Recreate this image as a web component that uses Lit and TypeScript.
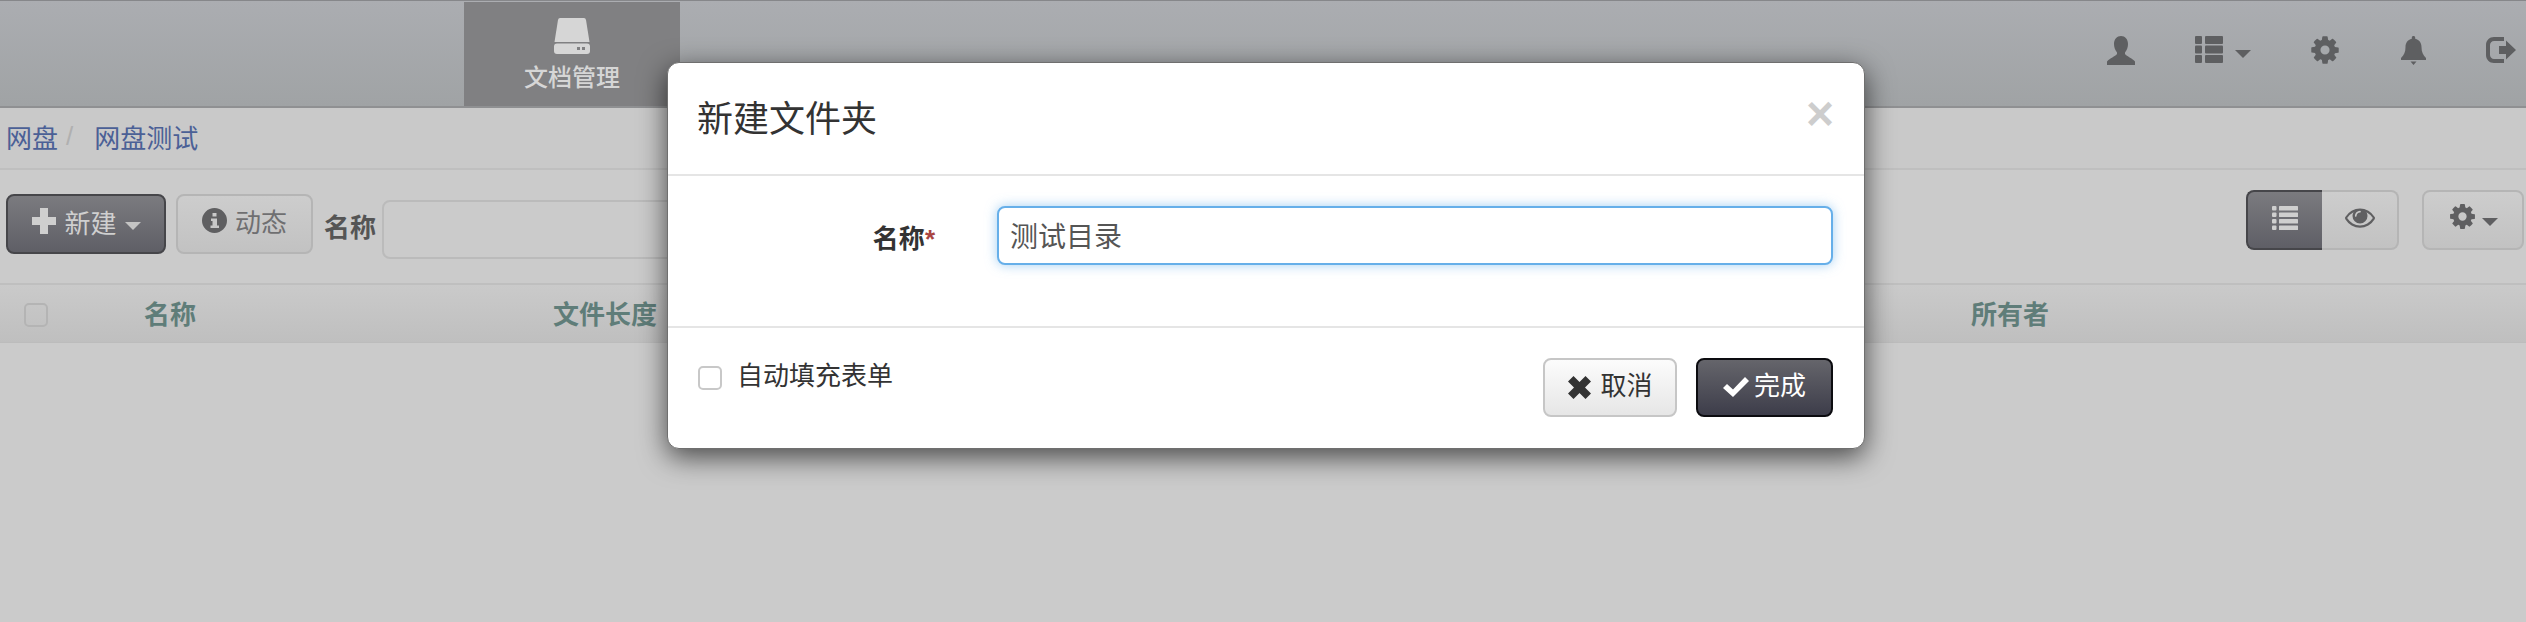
import { LitElement, html, css, svg } from "lit";
import { customElement } from "lit/decorators.js";

const ICONS: Record<string, string> = {
  cog: "M1152 896q0-106-75-181t-181-75-181 75-75 181 75 181 181 75 181-75 75-181zm512-109v222q0 12-8 23t-20 13l-185 28q-19 54-39 91 35 50 107 138 10 12 10 25t-9 23q-27 37-99 108t-94 71q-12 0-26-9l-138-108q-44 23-91 38-16 136-29 186-7 28-36 28h-222q-14 0-24.5-8.5t-11.5-21.5l-28-184q-49-16-90-37l-141 107q-10 9-25 9-14 0-25-11-126-114-165-168-7-10-7-23 0-12 8-23 15-21 51-66.5t54-70.5q-27-50-41-99l-183-27q-13-2-21-12.5t-8-23.5v-222q0-12 8-23t19-13l186-28q14-46 39-92-40-57-107-138-10-12-10-24 0-10 9-23 26-36 98.5-107.5t94.5-71.5q13 0 26 10l138 107q44-23 91-38 16-136 29-186 7-28 36-28h222q14 0 24.5 8.5t11.5 21.5l28 184q49 16 90 37l142-107q9-9 24-9 13 0 25 10 129 119 165 170 7 8 7 22 0 12-8 23-15 21-51 66.5t-54 70.5q26 50 41 98l183 28q13 2 21 12.5t8 23.5z",
  eye: "M1664 960q-152-236-381-353 61 104 61 225 0 185-131.5 316.5t-316.5 131.5-316.5-131.5-131.5-316.5q0-121 61-225-229 117-381 353 133 205 333.5 326.5t434.5 121.5 434.5-121.5 333.5-326.5zm-720-384q0-20-14-34t-34-14q-125 0-214.5 89.5t-89.5 214.5q0 20 14 34t34 14 34-14 14-34q0-86 61-147t147-61q20 0 34-14t14-34zm848 384q0 34-20 69-140 230-376.5 368.5t-499.5 138.5-499.5-139-376.5-368q-20-35-20-69t20-69q140-229 376.5-368t499.5-139 499.5 139 376.5 368q20 35 20 69z",
};

const icon = (name: string, size: number) => html`<svg class="ico" width=${size} height=${size} viewBox="0 0 1792 1792">
  <path d=${ICONS[name]} fill="currentColor"></path>
</svg>`;

const caret = () => html`<span class="caret"></span>`;

// drawn to the reference's own proportions, so each has its own box
const shape = (w: number, h: number, d: string) => html`<svg class="ico" width=${w} height=${h} viewBox="0 0 ${w} ${h}">
  <path d=${d} fill="currentColor" fill-rule="evenodd"></path>
</svg>`;

const userIcon = shape(
  28,
  29,
  "M14 0C10 0 7 3 7 8C7 11 8 14 10 16.5V18C8 20.500 3 22 0 25.500V29H28V25.500C25 22 20 20.500 18 18V16.500C20 14 21 11 21 8C21 3 18 0 14 0Z",
);
const bellIcon = shape(
  25,
  29,
  "M12.500 0c1 0 1.700.7 1.700 1.700v1C18.500 3.800 20.500 7 20.500 11c0 5 1.500 8 4.500 11v2H0v-2c3-3 4.500-6 4.500-11C4.500 7 6.500 3.800 10.800 2.700v-1C10.800.7 11.500 0 12.500 0zM9.500 25.500h6l-3 3.500z",
);
const signOutIcon = shape(
  30,
  26,
  "M18 0H8C3.500 0 0 3.500 0 8V18C0 22.500 3.500 26 8 26H18V22H8C5.800 22 4 20.200 4 18V8C4 5.800 5.800 4 8 4H18ZM13 9H20V3.500L30 13L20 22.500V17H13Z",
);
const plusIcon = shape(24, 26, "M8 0h8v9h8v8h-8v9H8v-9H0V9h8z");
const removeIcon = shape(23, 23, "M0 5.500L5.500 0L11.500 6L17.500 0L23 5.500L17 11.500L23 17.500L17.500 23L11.500 17L5.500 23L0 17.500L6 11.500Z");
const checkIcon = shape(26, 20, "M0 11L4 7L10 12.500L22 0L26 4L10 20Z");
const infoIcon = shape(
  25,
  25,
  "M12.500 0a12.500 12.500 0 1 0 0 25a12.500 12.500 0 1 0 0-25zM10.500 5h4v3.500h-4zM9 10.500h6v7h2V20H8.500v-2.500h2v-4.500H9z",
);

const thList = html`<svg class="ico" width="28" height="28" viewBox="0 0 28 28" fill="currentColor">
  ${[0, 9.5, 19].map(
    (y) => svg`<rect x="0" y=${y} width="7" height="8" rx="1"></rect><rect x="10" y=${y} width="18" height="8" rx="1"></rect>`,
  )}
</svg>`;

const listIcon = html`<svg class="ico" width="26" height="24" viewBox="0 0 26 24" fill="currentColor">
  ${[0, 6.5, 13, 19.5].map(
    (y) => svg`<rect x="0" y=${y} width="4.500" height="4.500" rx="1"></rect><rect x="7" y=${y} width="19" height="4.500" rx="0.6"></rect>`,
  )}
</svg>`;

const driveIcon = html`<svg class="ico" width="36" height="36" viewBox="0 0 36 36" fill="currentColor">
  <path d="M6 0h24q1.600 0 2 2l3.500 22H.5L4 2q.4-2 2-2z"></path>
  <path d="M3 25.500h30q3 0 3 3v4.500q0 3-3 3H3q-3 0-3-3v-4.500q0-3 3-3zM23 29v3h3v-3zM28 29v3h3v-3z" fill-rule="evenodd"></path>
</svg>`;

@customElement("app-root")
export class AppRoot extends LitElement {
  static styles = css`
    :host {
      display: block;
      position: relative;
      width: 2526px;
      height: 622px;
      overflow: hidden;
      background: #cbcbcb;
      font-family: "Liberation Sans", "Noto Sans CJK SC", sans-serif;
      font-size: 26px;
      color: #555;
    }

    .ico {
      display: block;
      flex: none;
    }

    .caret {
      display: block;
      flex: none;
      width: 0;
      height: 0;
      border-left: 8px solid transparent;
      border-right: 8px solid transparent;
      border-top: 8px solid currentColor;
    }

    .topbar {
      box-sizing: border-box;
      display: flex;
      height: 108px;
      padding-top: 1px;
      border-top: 1px solid #86878a;
      border-bottom: 2px solid #8f9092;
      background: linear-gradient(#abadb1, #a0a3a5);
      color: #5e5f61;
    }

    .tab {
      margin-left: 464px;
      width: 216px;
      box-sizing: border-box;
      padding-top: 16px;
      display: flex;
      flex-direction: column;
      align-items: center;
      gap: 7px;
      background: #808082;
      color: #d6d6d6;
      font-size: 24px;
      line-height: 34px;
      font-weight: 500;
    }

    .top-icons {
      margin-left: auto;
      padding: 33px 10px 0 0;
      display: flex;
      align-items: flex-start;
      gap: 58px;
    }

    .top-icons > * {
      width: 30px;
      height: 30px;
      display: flex;
      align-items: center;
      justify-content: center;
    }

    .top-icons > .with-caret {
      width: 58px;
      gap: 12px;
    }

    .top-icons > .with-caret .caret {
      margin-top: 8px;
    }

    .crumbs {
      box-sizing: border-box;
      height: 62px;
      padding: 0 0 4px 6px;
      display: flex;
      align-items: center;
      gap: 8px;
      border-bottom: 2px solid #bfbfbf;
      background: #c9c9c9;
      color: #4b6096;
    }

    .crumbs .sep {
      color: #b0b0b0;
      margin-right: 13px;
    }

    .toolbar {
      box-sizing: border-box;
      height: 115px;
      padding: 24px 2px 0 6px;
      display: flex;
      align-items: flex-start;
      border-bottom: 2px solid #bfbfbf;
      background: #cbcbcb;
    }

    .btn {
      box-sizing: border-box;
      height: 60px;
      display: flex;
      align-items: center;
      justify-content: center;
      border: 2px solid #b5b5b5;
      border-radius: 8px;
      background: linear-gradient(#cdcdcd, #c2c2c2);
      color: #5f5f61;
    }

    .btn.dark {
      border-color: #46464a;
      background: linear-gradient(#7b7b7f, #5f5f66);
      color: #cfcfcf;
    }

    .new-btn {
      width: 160px;
      gap: 8px;
      padding: 0 0 6px 1px;
    }

    .new-btn .caret {
      margin-top: 10px;
      color: #c4c4c4;
    }

    .activity-btn {
      width: 137px;
      margin-left: 10px;
      gap: 8px;
      color: #6f6f71;
      padding-bottom: 8px;
    }

    .activity-btn .ico {
      color: #5f5f61;
    }

    .filter-label {
      margin: 14px 6px 0 11px;
      font-weight: 700;
      line-height: 40px;
    }

    .filter-input {
      box-sizing: border-box;
      width: 400px;
      height: 59px;
      margin-top: 6px;
      border: 2px solid #bbb;
      border-radius: 8px;
      background: #cbcbcb;
    }

    .right-tools {
      margin-left: auto;
      margin-top: -4px;
      display: flex;
    }

    .view-list {
      width: 76px;
      border-radius: 8px 0 0 8px;
      border-right: 0;
      padding-bottom: 4px;
    }

    .view-eye {
      width: 77px;
      border-radius: 0 8px 8px 0;
      border-left: 0;
      padding-bottom: 6px;
    }

    .settings-btn {
      width: 102px;
      margin-left: 23px;
      gap: 5px;
    }

    .settings-btn .ico {
      margin-top: -8px;
    }

    .settings-btn .caret {
      margin-top: 3px;
    }

    .table-head {
      box-sizing: border-box;
      height: 58px;
      display: grid;
      grid-template-columns: 144px 409px 1418px 1fr;
      align-items: center;
      padding-bottom: 2px;
      border-bottom: 1px solid #bcbcbc;
      background: linear-gradient(#cacaca, #bfbfbf);
      color: #5f7d79;
      font-weight: 700;
    }

    .box {
      box-sizing: border-box;
      width: 24px;
      height: 24px;
      border: 2px solid #b4b4b4;
      border-radius: 5px;
    }

    .table-head .box {
      margin: 4px 0 0 24px;
    }

    .modal {
      position: absolute;
      left: 667px;
      top: 62px;
      width: 1198px;
      height: 387px;
      box-sizing: border-box;
      display: flex;
      flex-direction: column;
      border: 1px solid #6f6f6f;
      border-radius: 12px;
      background: #fff;
      box-shadow: 0 8px 28px rgba(0, 0, 0, 0.65);
      color: #333;
    }

    .modal-head {
      box-sizing: border-box;
      height: 113px;
      padding: 0 30px 0 29px;
      display: flex;
      align-items: center;
      justify-content: space-between;
      border-bottom: 2px solid #e5e5e5;
    }

    .modal-head h3 {
      margin: 0 0 5px;
      font-size: 36px;
      font-weight: 400;
    }

    .close {
      margin-bottom: 10px;
      font-size: 48px;
      line-height: 1;
      font-weight: 700;
      color: #cdcdcd;
    }

    .modal-body {
      box-sizing: border-box;
      height: 152px;
      padding: 30px 31px 0 0;
      display: flex;
      align-items: flex-start;
      border-bottom: 2px solid #e5e5e5;
    }

    .name-label {
      box-sizing: border-box;
      width: 267px;
      padding-top: 13px;
      text-align: right;
      font-weight: 700;
      line-height: 40px;
    }

    .name-label span {
      color: #a94442;
    }

    .name-input {
      box-sizing: border-box;
      flex: 1;
      height: 59px;
      margin-left: 62px;
      padding: 0 11px 2px;
      border: 2px solid #66afe9;
      border-radius: 8px;
      outline: none;
      box-shadow: 0 0 12px rgba(102, 175, 233, 0.6);
      font: inherit;
      font-size: 28px;
      color: #555;
    }

    .modal-foot {
      flex: 1;
      padding: 30px 31px 0 30px;
      display: flex;
      align-items: flex-start;
      justify-content: space-between;
    }

    .auto-fill {
      display: flex;
      align-items: center;
      gap: 15px;
      line-height: 36px;
    }

    .auto-fill .box {
      margin-top: 4px;
      border-color: #c8c8c8;
    }

    .foot-btns {
      display: flex;
      gap: 19px;
    }

    .cancel,
    .done {
      height: 59px;
      padding-bottom: 8px;
    }

    .cancel .ico,
    .done .ico {
      margin-top: 7px;
    }

    .cancel {
      width: 134px;
      gap: 9px;
      padding-left: 1px;
      border-color: #c6c6c6;
      background: linear-gradient(#fcfcfc, #e6e6e6);
      color: #333;
    }

    .btn.done {
      width: 137px;
      gap: 5px;
      border-color: #0c0c10;
      background: linear-gradient(#65656b, #3d3d4a);
      color: #fff;
    }
  `;

  render() {
    return html`
      <header class="topbar">
        <div class="tab">${driveIcon}<span>文档管理</span></div>
        <div class="top-icons">
          <span>${userIcon}</span>
          <span class="with-caret">${thList}${caret()}</span>
          <span>${icon("cog", 32)}</span>
          <span>${bellIcon}</span>
          <span>${signOutIcon}</span>
        </div>
      </header>

      <nav class="crumbs">
        <span>网盘</span><span class="sep">/</span><span>网盘测试</span>
      </nav>

      <section class="toolbar">
        <div class="btn dark new-btn">${plusIcon}<span>新建</span>${caret()}</div>
        <div class="btn activity-btn">${infoIcon}<span>动态</span></div>
        <span class="filter-label">名称</span>
        <div class="filter-input"></div>
        <div class="right-tools">
          <div class="btn dark view-list">${listIcon}</div>
          <div class="btn view-eye">${icon("eye", 30)}</div>
          <div class="btn settings-btn">${icon("cog", 29)}${caret()}</div>
        </div>
      </section>

      <div class="table-head">
        <div class="box"></div>
        <span>名称</span>
        <span>文件长度</span>
        <span>所有者</span>
      </div>

      <div class="modal">
        <div class="modal-head">
          <h3>新建文件夹</h3>
          <span class="close">×</span>
        </div>
        <div class="modal-body">
          <label class="name-label">名称<span>*</span></label>
          <input class="name-input" value="测试目录" />
        </div>
        <div class="modal-foot">
          <label class="auto-fill"><span class="box"></span>自动填充表单</label>
          <div class="foot-btns">
            <div class="btn cancel">${removeIcon}<span>取消</span></div>
            <div class="btn done">${checkIcon}<span>完成</span></div>
          </div>
        </div>
      </div>
    `;
  }
}
